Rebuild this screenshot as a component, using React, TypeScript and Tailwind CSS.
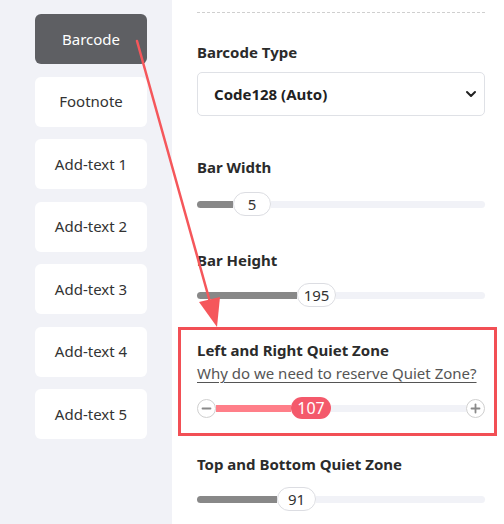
import { ChevronDown } from "lucide-react";

const tabs = ["Barcode", "Footnote", "Add-text 1", "Add-text 2", "Add-text 3", "Add-text 4", "Add-text 5"];

function Slider({ fill, value, thumbW }: { fill: number; value: string; thumbW: number }) {
  return (
    <div className="flex h-[24px] items-center">
      <div className="h-[7px] rounded-l-full bg-[#888888]" style={{ width: fill }} />
      <div
        className="flex h-[24px] shrink-0 items-center justify-center rounded-full border border-[#dcdde2] bg-white text-[15px] text-[#333]"
        style={{ width: thumbW }}
      >
        {value}
      </div>
      <div className="h-[7px] flex-1 rounded-r-full bg-[#f1f2f7]" />
    </div>
  );
}

function RoundBtn({ plus }: { plus?: boolean }) {
  return (
    <div className="flex h-[19px] w-[19px] shrink-0 items-center justify-center rounded-full border border-[#cfcfcf] bg-white">
      <svg width="11" height="11" viewBox="0 0 11 11">
        <path d="M1.5 5.5h8" stroke="#8a8a8a" strokeWidth="1.8" strokeLinecap="round" />
        {plus ? <path d="M5.5 1.5v8" stroke="#8a8a8a" strokeWidth="1.8" strokeLinecap="round" /> : null}
      </svg>
    </div>
  );
}

export default function App() {
  return (
    <div
      className="relative flex h-[524px] w-[504px] overflow-hidden bg-white"
      style={{ fontFamily: '"Noto Sans", "Open Sans", sans-serif' }}
    >
      <aside className="flex w-[172px] shrink-0 flex-col gap-[12.5px] bg-[#f1f2f7] pl-[35px] pt-[14px]">
        {tabs.map((t, i) => (
          <div
            key={t}
            className={
              i === 0
                ? "flex h-[50px] w-[112px] items-center justify-center rounded-[6px] bg-[#5e5f63] text-[15px] text-white"
                : "flex h-[50px] w-[112px] items-center justify-center rounded-[6px] bg-white text-[15px] text-[#333]"
            }
          >
            {t}
          </div>
        ))}
      </aside>

      <main className="flex-1 pl-[25px] pr-[19px] pt-[12px]">
        <div className="border-t border-dashed border-[#cfcfcf]" />

        <p className="mt-[29px] text-[15px] font-bold leading-[20px] text-[#2b2b2b]">Barcode Type</p>
        <div className="mt-[10px] flex h-[44px] items-center justify-between rounded-[5px] border border-[#dfe1e6] pl-[16px] pr-[5px]">
          <span className="text-[15px] font-bold text-[#222]">Code128 (Auto)</span>
          <ChevronDown size={16} strokeWidth={3} className="text-[#222]" />
        </div>

        <p className="mt-[41px] text-[15px] font-bold leading-[20px] text-[#2b2b2b]">Bar Width</p>
        <div className="mt-[15px]">
          <Slider fill={36} value="5" thumbW={38} />
        </div>

        <p className="mt-[34px] text-[15px] font-bold leading-[20px] text-[#2b2b2b]">Bar Height</p>
        <div className="mt-[13px]">
          <Slider fill={100} value="195" thumbW={39} />
        </div>

        <section className="-ml-[19px] -mr-[12px] mt-[20px] border-[3px] border-[#f24f55] pb-[14px] pl-[16px] pr-[9px] pt-[10px]">
          <p className="text-[15px] font-bold leading-[20px] text-[#2b2b2b]">Left and Right Quiet Zone</p>
          <p className="mt-[3px] text-[15px] leading-[20px] text-[#555] underline underline-offset-[3px]">
            Why do we need to reserve Quiet Zone?
          </p>
          <div className="mt-[14px] flex h-[22px] items-center">
            <RoundBtn />
            <div className="h-[7px] w-[75px] bg-[#ff7f89]" />
            <div className="flex h-[22px] w-[40px] shrink-0 items-center justify-center rounded-full bg-[#f4596b] text-[16px] text-white">
              107
            </div>
            <div className="h-[7px] flex-1 bg-[#f1f2f7]" />
            <RoundBtn plus />
          </div>
        </section>

        <p className="mt-[18px] text-[15px] font-bold leading-[20px] text-[#2b2b2b]">Top and Bottom Quiet Zone</p>
        <div className="mt-[13px]">
          <Slider fill={80} value="91" thumbW={39} />
        </div>
      </main>

      <svg className="pointer-events-none absolute left-0 top-0" width="504" height="524" viewBox="0 0 504 524">
        <path d="M137 41 L210 302" stroke="#f5575b" strokeWidth="2.5" strokeLinecap="round" />
        <path d="M217 327 L199 302 L220 297 Z" fill="#f5575b" />
      </svg>
    </div>
  );
}
